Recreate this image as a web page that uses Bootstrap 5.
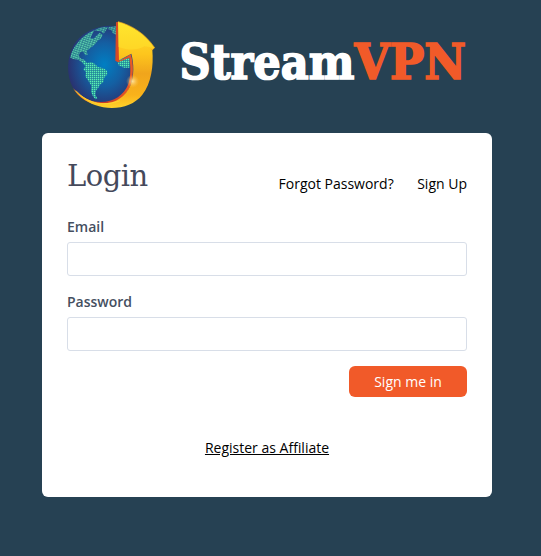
<!DOCTYPE html>
<html lang="en">
<head>
<meta charset="utf-8">
<meta name="viewport" content="width=device-width, initial-scale=1">
<title>StreamVPN Login</title>
<link rel="stylesheet" href="https://cdn.jsdelivr.net/npm/bootstrap@5.3.0/dist/css/bootstrap.min.css">
<style>
html,body{height:100%}
body{background:#264153;font-family:"Open Sans",sans-serif;font-size:14px;line-height:20px;color:#000;overflow:hidden}
.login-shell{width:450px;margin-left:42px}
.brand-header{height:133px;padding:15px 0 0 18px}
.brand-name{font:bold 48px "DejaVu Serif",serif}
.login-panel{height:364px;border-radius:6px;padding:25px}
.login-title{font:29px/36px "DejaVu Serif",serif;color:#45495b;letter-spacing:-.5px;margin:0}
.top-links{gap:23.5px;padding-top:16px}
.login-panel a{color:#000}
.login-form{padding-top:23px}
.form-label{font-weight:600;color:#454f5f;margin-bottom:5px;line-height:20px;display:block}
.form-control{height:34px;border:1px solid #d8dee8;border-radius:3px;font-size:14px}
.form-submit{margin-top:15px}
.btn-signin{width:118px;height:31px;background:#f15a29;color:#fff;border:0;border-radius:6px;font-size:14px;line-height:20px;padding:6px 0 5px}
.btn-signin:hover{background:#df4f20;color:#fff}
.affiliate-link{margin-top:41px}
</style>
</head>
<body>
<main class="login-shell">
<header class="brand-header d-flex">
<svg width="420" height="100" viewBox="0 0 420 100" role="img" aria-label="StreamVPN">
<defs>
<radialGradient id="ocean" cx=".55" cy=".5" r=".58"><stop offset="0" stop-color="#007fc3"/><stop offset=".48" stop-color="#145fa2"/><stop offset="1" stop-color="#2b2e6c"/></radialGradient>
<linearGradient id="gold" x1="0" y1="0" x2="0" y2="1"><stop offset="0" stop-color="#ffe52e"/><stop offset=".38" stop-color="#fdc51d"/><stop offset=".6" stop-color="#f0a51c"/><stop offset=".85" stop-color="#f9b21b"/><stop offset="1" stop-color="#ffd22a"/></linearGradient>
<linearGradient id="rim" x1="0" y1="0" x2="1" y2="0"><stop offset="0" stop-color="#f28c20"/><stop offset=".5" stop-color="#c83925"/><stop offset="1" stop-color="#e95b25"/></linearGradient>
<radialGradient id="glow"><stop offset="0" stop-color="#ffecb0" stop-opacity=".85"/><stop offset="1" stop-color="#ffc34a" stop-opacity="0"/></radialGradient>
<pattern id="dots" width="6" height="6" patternUnits="userSpaceOnUse"><rect width="6" height="6" fill="#1b7d98"/><rect x="0" y="0" width="4" height="4" fill="#5cf0b2"/></pattern>
<pattern id="rows" width="7.5" height="6.5" patternUnits="userSpaceOnUse" patternTransform="rotate(18)"><rect width="7.5" height="6.5" fill="#2b8090"/><rect width="5.5" height="3.7" fill="#5ccfac"/></pattern>
</defs>
<g transform="scale(.33333)">
<path d="M170 34C132 26 80 42 50 77C24 109 17 163 32 203C49 248 86 268 127 266C182 263 222 216 222 158C222 96 202 47 170 34Z" fill="url(#ocean)"/>
<path d="M31 128C36 98 61 67 93 50L104 45L97 57L91 69L101 71L111 61L119 53L128 60L122 71L113 77L105 88L96 95L87 102L80 108L83 119L76 121L70 110L60 112L56 122L63 131L73 134L75 147L66 142L55 134L41 132Z" fill="url(#rows)"/>
<path d="M102 47C116 38 130 35 144 36L137 48L131 56L122 49L113 48ZM146 36L170 34L170 61L158 54L154 45L145 43Z" fill="url(#rows)" opacity=".85"/>
<path d="M66 140L75 136L81 144L94 141L105 147L114 156L131 160L141 167L142 178L132 189L130 202L121 208L115 218L109 225L106 238L112 251L106 253L99 244L93 230L94 212L86 199L76 184L78 172L70 163L77 154L70 147Z" fill="url(#dots)"/>
<path d="M172 137L209 123L209 158L191 158L176 151Z" fill="url(#dots)"/>
<path d="M168 22L175 20L178 138L212 118C222 148 220 186 211 213C196 251 159 270 122 270C87 269 55 248 39 219C62 247 91 261 122 261C162 261 192 240 205 207C213 184 212 153 208 128L174 142L166 137Z" fill="url(#rim)"/>
<path d="M174 20C217 31 255 56 284 98L277 105C281 153 274 205 247 239C216 279 154 288 105 270C78 260 55 241 44 224C66 247 94 263 125 265C166 266 197 245 211 212C223 182 222 146 214 116L177 136Z" fill="url(#gold)"/>
<path d="M174 22C216 34 255 58 282 98L253 94C231 107 205 106 175 96Z" fill="#ffe72f" opacity=".45"/>
<path d="M174 20C217 31 255 56 284 98L276 105L272 101" fill="none" stroke="#f3a71d" stroke-width="2"/>
<path d="M48 227C86 270 138 273 180 257" fill="none" stroke="#ffdf36" stroke-width="2"/>
<circle cx="218" cy="199" r="20" fill="url(#glow)"/>
</g>
<text class="brand-name" x="119.5" y="64" stroke-width="1.7"><tspan textLength="175" lengthAdjust="spacingAndGlyphs" fill="#fff" stroke="#fff">Stream</tspan><tspan textLength="111.5" lengthAdjust="spacingAndGlyphs" fill="#f15a29" stroke="#f15a29">VPN</tspan></text>
</svg>
</header>
<section class="login-panel bg-white">
<div class="d-flex justify-content-between align-items-start">
<h1 class="login-title">Login</h1>
<nav class="top-links d-flex"><a class="text-decoration-none" href="#">Forgot Password?</a><a class="text-decoration-none" href="#">Sign Up</a></nav>
</div>
<form class="login-form">
<div><label class="form-label" for="email">Email</label><input class="form-control" id="email" type="email"></div>
<div class="mt-3"><label class="form-label" for="password">Password</label><input class="form-control" id="password" type="password"></div>
<div class="form-submit d-flex justify-content-end"><button class="btn btn-signin" type="submit">Sign me in</button></div>
</form>
<div class="affiliate-link text-center"><a href="#">Register as Affiliate</a></div>
</section>
</main>
<script src="https://cdn.jsdelivr.net/npm/bootstrap@5.3.0/dist/js/bootstrap.bundle.min.js"></script>
</body>
</html>
